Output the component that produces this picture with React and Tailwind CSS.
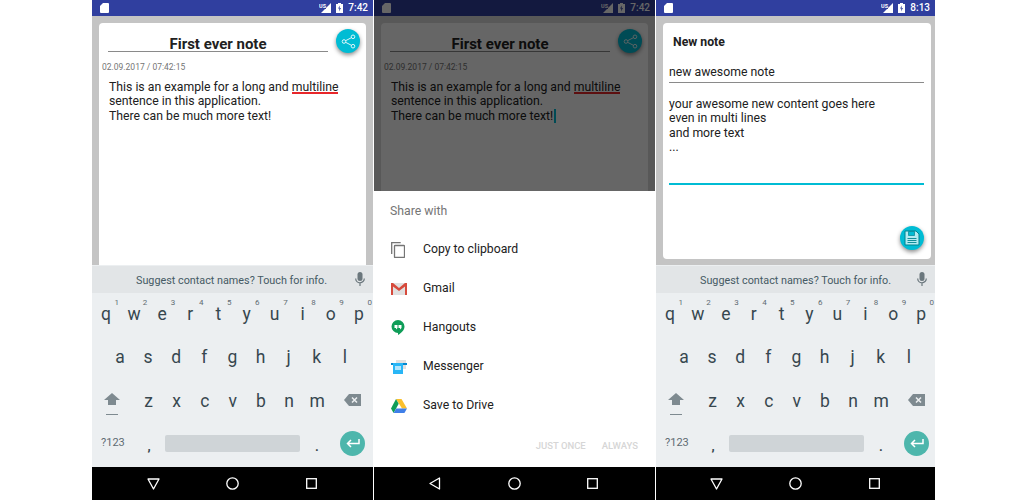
import React from 'react';

const rowOne = [['q', '1'], ['w', '2'], ['e', '3'], ['r', '4'], ['t', '5'], ['y', '6'], ['u', '7'], ['i', '8'], ['o', '9'], ['p', '0']];
const rowTwo = ['a', 's', 'd', 'f', 'g', 'h', 'j', 'k', 'l'];
const rowThree = ['z', 'x', 'c', 'v', 'b', 'n', 'm'];

const StatusBar = ({ time }) => (
    <div className="h-4 bg-[#303f9f] flex items-center justify-between pl-[8px] pr-[5px] shrink-0">
        <svg width="9" height="10" viewBox="0 0 9 10"><path d="M3 0h5a1 1 0 0 1 1 1v8a1 1 0 0 1-1 1H1a1 1 0 0 1-1-1V3z" fill="#fff" /></svg>
        <div className="flex items-center">
            <svg width="12" height="10" viewBox="0 0 12 10">
                <path d="M12 0v10H2z" fill="#fff" />
                <path d="M0 0h7v6H0z" fill="#303f9f" />
                <text x="0" y="5" fontSize="5.500" fontWeight="700" fill="#fff" fontFamily="Roboto, sans-serif">US</text>
            </svg>
            <svg className="ml-[5px] mr-[5px]" width="7" height="10" viewBox="0 0 7 10">
                <path d="M2 0h3v1h2v9H0V1h2z" fill="#fff" />
                <path d="M4 2.500 2 5.500h1.400L3 8.500l2-3.400H3.600z" fill="#303f9f" />
            </svg>
            <span className="text-[10px] leading-none font-medium text-white">{time}</span>
        </div>
    </div>
);

const NavBar = ({ back }) => (
    <div className="h-[33px] bg-black flex items-center justify-center gap-[66.5px] pr-[2px] shrink-0">
        {back ? (
            <svg width="12" height="13" viewBox="0 0 12 13"><path d="M10.500 1v11L1 6.500z" fill="none" stroke="#fff" strokeWidth="1.300" strokeLinejoin="round" /></svg>
        ) : (
            <svg width="13" height="12" viewBox="0 0 13 12"><path d="M1 1h11L6.500 11z" fill="none" stroke="#fff" strokeWidth="1.300" strokeLinejoin="round" /></svg>
        )}
        <svg width="13" height="13" viewBox="0 0 13 13"><circle cx="6.500" cy="6.500" r="5.700" fill="none" stroke="#fff" strokeWidth="1.300" /></svg>
        <svg width="11" height="11" viewBox="0 0 11 11"><rect x=".7" y=".7" width="9.600" height="9.600" fill="none" stroke="#fff" strokeWidth="1.300" /></svg>
    </div>
);

const Key = ({ label, hint }) => (
    <div className="w-[28.1px] text-center relative text-[17.5px] leading-none text-[#37474f]">
        {hint && <span className="absolute right-[1px] top-[-8px] text-[8px] leading-[10px] text-[#5f6b72]">{hint}</span>}
        {label}
    </div>
);

const Keyboard = () => (
    <div className="h-[202px] bg-[#eceff1] shrink-0 flex flex-col">
        <div className="h-[27px] mt-[1px] bg-[#e2e5e7] flex items-center relative pl-[44px] pt-[3px]">
            <span className="text-[10.8px] text-[#455a64]">Suggest contact names? Touch for info.</span>
            <svg className="absolute right-[8px] top-[6px]" width="10" height="15" viewBox="0 0 10 15">
                <rect x="2.500" y="0" width="5" height="9" rx="2.500" fill="#6b777d" />
                <path d="M.7 6.500a4.300 4.300 0 0 0 8.600 0M5 11v3" fill="none" stroke="#6b777d" strokeWidth="1.200" />
            </svg>
        </div>
        <div className="flex mt-[13px] h-[20px]">
            {rowOne.map(([k, n]) => <Key key={k} label={k} hint={n} />)}
        </div>
        <div className="flex mt-[23px] h-[20px] pl-[14px]">
            {rowTwo.map((k) => <Key key={k} label={k} />)}
        </div>
        <div className="flex items-start mt-[24px] h-[24px] pl-[6px]">
            <div className="w-[27px] mr-[9.5px] flex flex-col items-center">
                <svg width="16" height="13" viewBox="0 0 16 13"><path d="M8 0l8 7h-4v5H4V7H0z" fill="#7e8a90" /></svg>
                <div className="w-[12px] h-[1px] bg-[#7e8a90] mt-[8px]" />
            </div>
            {rowThree.map((k) => <Key key={k} label={k} />)}
            <svg className="ml-[13px] mt-[1px]" width="17" height="12" viewBox="0 0 17 12">
                <path d="M5 0h12v12H5L0 6z" fill="#7e8a90" />
                <path d="M8 3.500l5 5M13 3.500l-5 5" stroke="#eceff1" strokeWidth="1.500" />
            </svg>
        </div>
        <div className="flex items-center mt-[13px] h-[26px] pl-[9px]">
            <span className="w-[32px] text-[11px] text-[#5f6b72]">?123</span>
            <span className="w-[32px] text-center text-[13px] leading-none font-bold text-[#37474f] pt-[6px]">,</span>
            <div className="w-[135px] h-[17px] bg-[#cfd4d7] rounded-[2px]" />
            <span className="w-[34px] text-center text-[13px] leading-none font-bold text-[#37474f] pt-[6px]">.</span>
            <div className="w-[25px] h-[25px] rounded-full bg-[#4db6ac] flex items-center justify-center ml-[6px]">
                <svg width="14" height="9" viewBox="0 0 14 9"><path d="M13 0v4.500H2M5 1 1.500 4.500 5 8" fill="none" stroke="#fff" strokeWidth="1.500" /></svg>
            </div>
        </div>
    </div>
);

const ShareFab = () => (
    <div className="absolute right-[6px] top-[6px] w-6 h-6 rounded-full bg-[#00bcd4] shadow-[0_2px_4px_rgba(0,0,0,0.45)] flex items-center justify-center">
        <svg width="15" height="15" viewBox="0 0 15 15" fill="none" stroke="#e0f7fa" strokeWidth="1">
            <circle cx="3" cy="7.500" r="1.800" />
            <circle cx="12" cy="2.800" r="1.800" />
            <circle cx="12" cy="12.200" r="1.800" />
            <path d="M4.600 6.700l5.800-3M4.600 8.300l5.800 3" />
        </svg>
    </div>
);

const SaveFab = () => (
    <div className="absolute right-[7px] bottom-[9px] w-6 h-6 rounded-full bg-[#00bcd4] shadow-[0_2px_4px_rgba(0,0,0,0.45)] flex items-center justify-center">
        <svg width="16" height="16" viewBox="0 0 16 16">
            <path d="M1 1h11l3 3v11H1z" fill="#b2ebf2" stroke="#00838f" strokeWidth="1" />
            <path d="M4.500 1.500h6v4h-6z" fill="#00bcd4" stroke="#00838f" strokeWidth=".7" />
            <path d="M3.500 8.500h9M3.500 10.500h9M3.500 12.500h9" stroke="#00838f" strokeWidth=".9" />
        </svg>
    </div>
);

const NoteCard = ({ cursor }) => (
    <div className="bg-white rounded-[4px] h-[260px] relative">
        <div className="pt-[14px] ml-[9px] w-[220px] border-b border-[#8a8a8a] text-center text-[15px] leading-[14px] font-bold text-[#212121]">
            First ever note
        </div>
        <div className="mt-[9px] ml-[3px] text-[8.5px] leading-[12px] text-[#757575]">02.09.2017 / 07:42:15</div>
        <div className="mt-[7px] ml-[10px] text-[12.25px] leading-[14.4px] text-[#212121]">
            <div>
                This is an example for a long and{' '}
                <span className="relative">
                    multiline
                    <span className="absolute left-0 right-0 bottom-0 h-[2px] bg-[#e8262a]" />
                </span>
            </div>
            <div>sentence in this application.</div>
            <div className="flex">There can be much more text!{cursor && <span className="w-[2px] h-[14px] bg-[#00bcd4] ml-[1px]" />}</div>
        </div>
        <ShareFab />
    </div>
);

const shareTargets = [
    {
        name: 'Copy to clipboard',
        icon: (
            <svg width="14" height="16" viewBox="0 0 14 16" fill="none" stroke="#757575" strokeWidth="1.300">
                <path d="M.7 12V.7h9" />
                <rect x="3.500" y="3.500" width="10" height="12" rx=".6" />
            </svg>
        ),
    },
    {
        name: 'Gmail',
        icon: (
            <svg width="16" height="12" viewBox="0 0 16 12">
                <rect width="16" height="12" fill="#e0e0e0" />
                <path d="M0 0h2l6 5 6-5h2v12h-2V3.500L8 8 2 3.500V12H0z" fill="#d64a3c" />
            </svg>
        ),
    },
    {
        name: 'Hangouts',
        icon: (
            <svg width="14" height="16" viewBox="0 0 14 16">
                <path d="M7 0a6.500 6.500 0 0 1 6.500 6.500C13.500 10 10.500 13 7 15v-2A6.500 6.500 0 0 1 7 0z" fill="#0f9d58" />
                <path d="M3.500 5h3v3L5 9.500V8H3.500zM7.500 5h3v3L9 9.500V8H7.500z" fill="#fff" />
            </svg>
        ),
    },
    {
        name: 'Messenger',
        icon: (
            <svg width="16" height="14" viewBox="0 0 16 14">
                <path d="M5 0h10v9H5z" fill="#e0e0e0" />
                <path d="M0 3h16v2H0z" fill="#0288d1" />
                <path d="M2 3h10v11H2z" fill="#29b6f6" />
                <path d="M4 6h6v4H4z" fill="#b3e5fc" />
            </svg>
        ),
    },
    {
        name: 'Save to Drive',
        icon: (
            <svg width="16" height="14" viewBox="0 0 16 14">
                <path d="M5 0h5.500L16 9.500h-5z" fill="#fbc02d" />
                <path d="M5 0l2.700 4.800L2.600 14 0 9.500z" fill="#0f9d58" />
                <path d="M5.200 9.500H16L13.400 14H2.600z" fill="#3f7fe8" />
            </svg>
        ),
    },
];

const ShareSheet = () => (
    <div className="h-[276px] bg-white flex flex-col shrink-0">
        <div className="pt-[13px] pl-[16px] text-[12.25px] leading-[14px] text-[#757575]">Share with</div>
        <div className="mt-[12px]">
            {shareTargets.map((t) => (
                <div key={t.name} className="h-[39px] flex items-center">
                    <div className="w-[49px] pl-[17px] flex items-center">{t.icon}</div>
                    <span className="text-[12.25px] text-[#212121]">{t.name}</span>
                </div>
            ))}
        </div>
        <div className="mt-[14px] pr-[17px] flex justify-end gap-[16px] text-[9.5px] font-medium text-[#d6d6d6]">
            <span>JUST ONCE</span>
            <span>ALWAYS</span>
        </div>
    </div>
);

const NewNote = () => (
    <div className="bg-white rounded-[4px] h-[236px] relative pl-[6px] pr-[7px]">
        <div className="pt-[12px] pl-[4px] text-[12.25px] leading-[14px] font-bold text-[#212121]">New note</div>
        <div className="mt-[16px] pb-[2px] border-b border-[#8a8a8a] text-[12.25px] leading-[15px] text-[#212121]">new awesome note</div>
        <div className="mt-[14px] h-[88px] border-b-2 border-[#00bcd4] text-[12.25px] leading-[14.4px] text-[#212121]">
            <div>your awesome new content goes here</div>
            <div>even in multi lines</div>
            <div>and more text</div>
            <div>...</div>
        </div>
        <SaveFab />
    </div>
);

export default function App() {
    return (
        <div className="w-[1024px] h-[500px] bg-white flex pl-[92px] overflow-hidden font-['Roboto',sans-serif]">
            {/* Note detail with keyboard */}
            <div className="w-[281px] h-[500px] flex flex-col">
                <StatusBar time="7:42" />
                <div className="flex-1 min-h-0 overflow-hidden bg-[#c4c4c4] px-[7px] pt-[7px]">
                    <NoteCard />
                </div>
                <Keyboard />
                <NavBar />
            </div>

            {/* Share sheet over the dimmed note */}
            <div className="w-[281px] h-[500px] ml-[1px] flex flex-col">
                <div className="flex-1 min-h-0 relative overflow-hidden flex flex-col">
                    <StatusBar time="7:42" />
                    <div className="flex-1 bg-[#dcdcdc] px-[7px] pt-[7px]">
                        <NoteCard cursor />
                    </div>
                    <div className="absolute inset-0 bg-black/60" />
                </div>
                <ShareSheet />
                <NavBar back />
            </div>

            {/* New note form */}
            <div className="w-[279px] h-[500px] ml-[1px] flex flex-col">
                <StatusBar time="8:13" />
                <div className="flex-1 min-h-0 overflow-hidden bg-[#c4c4c4] pl-[7px] pr-[4px] pt-[7px]">
                    <NewNote />
                </div>
                <Keyboard />
                <NavBar />
            </div>
        </div>
    );
}
